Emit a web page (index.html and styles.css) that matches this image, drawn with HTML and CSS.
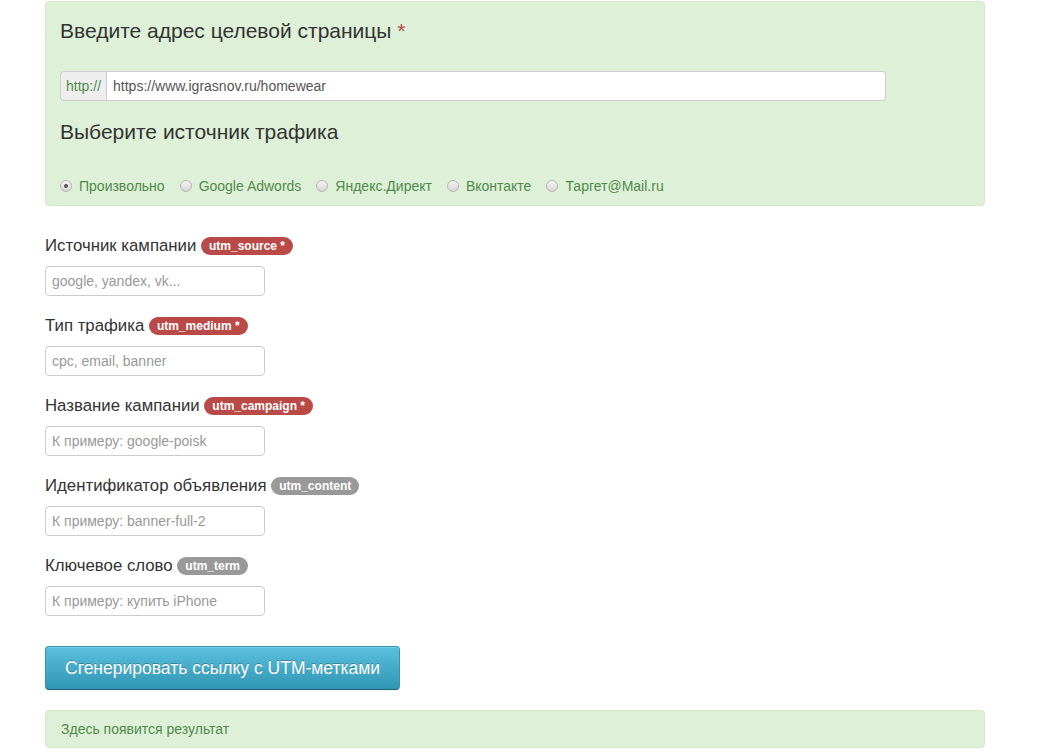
FILE: index.html
```html
<!DOCTYPE html>
<html lang="ru">
<head>
  <meta charset="UTF-8">
  <title>Генератор UTM-меток</title>
  <link rel="stylesheet" href="styles.css">
</head>
<body>
  <div class="container">
    <div class="alert alert-success target-box">
      <h4>Введите адрес целевой страницы <span class="required">*</span></h4>
      <div class="input-prepend">
        <span class="add-on">http://</span>
        <input type="text" class="url-input" value="https://www.igrasnov.ru/homewear">
      </div>
      <h4>Выберите источник трафика</h4>
      <div class="sources">
        <label class="radio-inline"><input type="radio" name="src" checked> Произвольно</label>
        <label class="radio-inline"><input type="radio" name="src"> Google Adwords</label>
        <label class="radio-inline"><input type="radio" name="src"> Яндекс.Директ</label>
        <label class="radio-inline"><input type="radio" name="src"> Вконтакте</label>
        <label class="radio-inline"><input type="radio" name="src"> Таргет@Mail.ru</label>
      </div>
    </div>

    <div class="field">
      <label>Источник кампании <span class="badge badge-important">utm_source *</span></label>
      <input type="text" placeholder="google, yandex, vk...">
    </div>
    <div class="field">
      <label>Тип трафика <span class="badge badge-important">utm_medium *</span></label>
      <input type="text" placeholder="cpc, email, banner">
    </div>
    <div class="field">
      <label>Название кампании <span class="badge badge-important">utm_campaign *</span></label>
      <input type="text" placeholder="К примеру: google-poisk">
    </div>
    <div class="field">
      <label>Идентификатор объявления <span class="badge">utm_content</span></label>
      <input type="text" placeholder="К примеру: banner-full-2">
    </div>
    <div class="field">
      <label>Ключевое слово <span class="badge">utm_term</span></label>
      <input type="text" placeholder="К примеру: купить iPhone">
    </div>

    <button class="btn btn-info btn-large">Сгенерировать ссылку с UTM-метками</button>

    <div class="alert alert-success result">Здесь появится результат</div>
  </div>
</body>
</html>
```

FILE: styles.css
```css
/* Общие стили */
body {
  margin: 0;
  font-family: "Liberation Sans", Arial, sans-serif;
  font-size: 14px;
  color: #333;
  background-color: #fff;
}

.container {
  width: 940px;
  padding: 1px 0 0 45px;
}

.alert {
  background-color: #dff0d8;
  border: 1px solid #d6e9c6;
  border-radius: 4px;
  color: #4f8a4c;
}

.target-box {
  padding: 14px 14px 9px;
}

.target-box h4 {
  margin: 0;
  font-size: 21px;
  font-weight: normal;
  line-height: 30px;
  color: #333;
}

.required {
  color: #b94a48;
}

.input-prepend {
  display: flex;
  width: 826px;
  margin: 25px 0 16px;
}

.add-on {
  padding: 0 5px;
  line-height: 28px;
  background-color: #eee;
  border: 1px solid #ccc;
  border-radius: 4px 0 0 4px;
  color: #4f8a4c;
  font-size: 14px;
}

.url-input {
  flex-grow: 1;
  height: 30px;
  padding: 0 6px;
  margin: 0;
  border: 1px solid #ccc;
  border-left: none;
  border-radius: 0 4px 4px 0;
  font-family: inherit;
  font-size: 14px;
  color: #555;
  box-sizing: border-box;
}

.sources {
  display: flex;
  gap: 15px;
  margin-top: 29px;
}

.radio-inline {
  display: flex;
  align-items: center;
  gap: 7px;
  font-size: 14px;
  line-height: 20px;
}

.radio-inline input {
  appearance: none;
  margin: 0;
  width: 12px;
  height: 12px;
  border: 1px solid #b5b5b5;
  border-radius: 50%;
  background: linear-gradient(to bottom, #f4f4f4, #d6d6d6);
  box-sizing: border-box;
  display: grid;
  place-items: center;
}

.radio-inline input:checked::after {
  content: "";
  width: 4px;
  height: 4px;
  border-radius: 50%;
  background-color: #555;
}

.field {
  margin-top: 30px;
}

.field + .field {
  margin-top: 20px;
}

.field label {
  display: block;
  font-size: 16.8px;
  line-height: 20px;
  margin-bottom: 10px;
}

.badge {
  display: inline-block;
  padding: 0 8px;
  font-size: 12px;
  font-weight: bold;
  line-height: 18px;
  color: #fff;
  background-color: #999;
  border-radius: 9px;
  vertical-align: 1px;
}

.badge-important {
  background-color: #b94a48;
}

.field input {
  display: block;
  width: 220px;
  height: 30px;
  box-sizing: border-box;
  padding: 0 6px;
  margin: 0;
  border: 1px solid #ccc;
  border-radius: 4px;
  font-family: inherit;
  font-size: 14px;
}

.field input::placeholder {
  color: #999;
}

.btn {
  display: block;
  margin-top: 30px;
  padding: 0 19px;
  height: 44px;
  white-space: nowrap;
  font-family: inherit;
  font-size: 17.5px;
  color: #fff;
  text-shadow: 0 -1px 0 rgba(0, 0, 0, 0.25);
  background-image: linear-gradient(to bottom, #5bc0de, #2f96b4);
  border: 1px solid #2f96b4;
  border-bottom-color: #1f6377;
  border-radius: 4px;
  box-shadow: inset 0 1px 0 rgba(255, 255, 255, 0.2), 0 1px 2px rgba(0, 0, 0, 0.05);
  cursor: pointer;
}

.result {
  margin-top: 20px;
  padding: 0 15px;
  line-height: 36px;
  font-size: 14px;
}
```
